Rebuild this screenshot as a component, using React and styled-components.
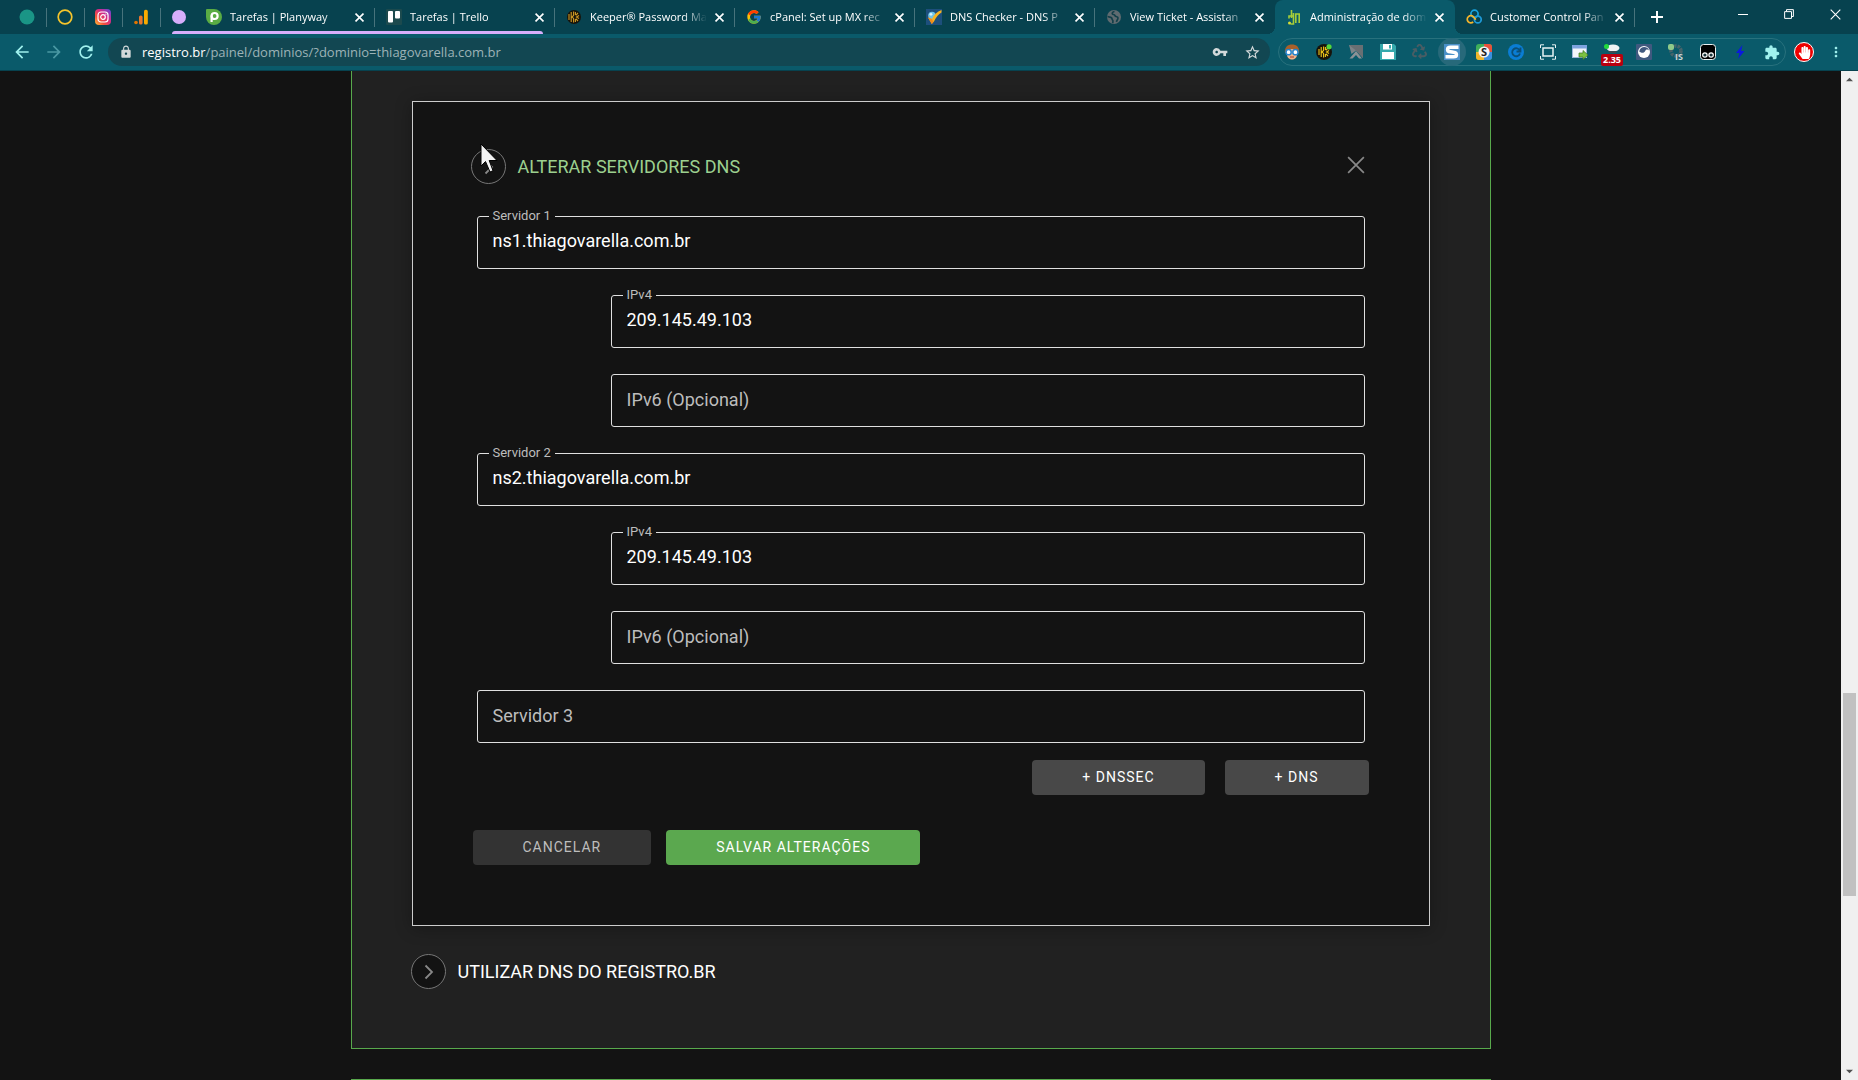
import React, { useState } from 'react';
import styled, { createGlobalStyle, css } from 'styled-components';
import { FcGoogle } from 'react-icons/fc';
import { FaRecycle, FaHandPaper } from 'react-icons/fa';
import {
  MdArrowBack,
  MdArrowForward,
  MdRefresh,
  MdLock,
  MdVpnKey,
  MdStarBorder,
  MdExtension,
  MdMoreVert,
} from 'react-icons/md';

const GlobalStyle = createGlobalStyle`
  * {
    box-sizing: border-box;
  }

  body {
    margin: 0;
    background: #131313;
    font-family: Roboto, "Liberation Sans", sans-serif;
  }

  button {
    margin: 0;
    padding: 0;
    border: 0;
    background: none;
    color: inherit;
    font: inherit;
    cursor: pointer;
  }
`;

const Window = styled.div`
  display: flex;
  flex-direction: column;
  height: 100vh;
  overflow: hidden;
`;

/* ---------- browser chrome ---------- */

const Chrome = styled.header`
  flex: none;
  font-family: "Open Sans", "Noto Sans", sans-serif;
  color: #fff;
`;

const TabStrip = styled.div`
  display: flex;
  height: 34px;
  padding-left: 9px;
  background: #07424f;
`;

const separator = css`
  &::after {
    content: '';
    position: absolute;
    top: 8px;
    right: 0;
    width: 1px;
    height: 19px;
    background: #47737c;
  }
`;

const PinnedTab = styled.button`
  position: relative;
  display: flex;
  align-items: center;
  justify-content: center;
  flex: none;
  width: 38px;
  padding-right: 2px;
  ${separator}
`;

const TabGroup = styled.div`
  position: relative;
  display: flex;
  flex: 0 1 394px;
  min-width: 0;

  &::before {
    content: '';
    position: absolute;
    left: 11px;
    right: 12px;
    bottom: 0;
    height: 3px;
    border-radius: 3px 3px 0 0;
    background: #d7aefb;
  }
`;

const GroupChip = styled.button`
  flex: none;
  align-self: center;
  width: 14px;
  height: 14px;
  margin: 0 9px 0 11px;
  border-radius: 50%;
  background: #d7aefb;
`;

const TabBox = styled.div`
  position: relative;
  display: flex;
  align-items: center;
  flex: 0 1 180px;
  gap: 8px;
  min-width: 0;
  padding: 0 11px;
  ${(props) => props.$line && separator}
  ${(props) =>
    props.$active &&
    css`
      border-radius: 8px 8px 0 0;
      background: #0a5a6a;

      &::before,
      &::after {
        content: '';
        position: absolute;
        bottom: 0;
        width: 8px;
        height: 8px;
      }

      &::before {
        left: -8px;
        background: radial-gradient(circle at 0 0, #07424f 8px, #0a5a6a 8px);
      }

      &::after {
        right: -8px;
        background: radial-gradient(circle at 100% 0, #07424f 8px, #0a5a6a 8px);
      }
    `}
`;

const TabTitle = styled.span`
  flex: 1;
  min-width: 0;
  overflow: hidden;
  white-space: nowrap;
  font-size: 11px;
  line-height: 16px;
  mask-image: linear-gradient(to right, #000 calc(100% - 24px), transparent);
`;

const TabClose = styled.button`
  display: flex;
  flex: none;
`;

const NewTab = styled.button`
  display: flex;
  align-items: center;
  justify-content: center;
  flex: none;
  width: 44px;
`;

const WindowControls = styled.div`
  display: flex;
  flex: none;
  height: 28px;
  margin-left: auto;
`;

const WindowButton = styled.button`
  display: flex;
  align-items: center;
  justify-content: center;
  width: 46px;
`;

const Toolbar = styled.div`
  display: flex;
  align-items: center;
  height: 37px;
  padding: 0 14px 0 6px;
  border-bottom: 1px solid #07424f;
  background: #0a5a6a;
`;

const NavButton = styled.button`
  display: flex;
  align-items: center;
  justify-content: center;
  width: 32px;
  height: 28px;
  color: ${(props) => (props.$dim ? '#4a98a3' : '#a0f1ee')};
`;

const Omnibox = styled.div`
  display: flex;
  align-items: center;
  flex: 1;
  min-width: 0;
  height: 28px;
  margin: 0 8px 0 6px;
  padding: 0 9px 0 11px;
  border-radius: 14px;
  background: #124752;
  color: #d3d9da;
`;

const Address = styled.div`
  flex: 1;
  min-width: 0;
  margin-left: 9px;
  overflow: hidden;
  white-space: nowrap;
  font-size: 13px;
  line-height: 20px;
  color: #9db3b7;

  b {
    font-weight: 400;
    color: #fff;
  }
`;

const OmniButton = styled.button`
  display: flex;
  margin-left: 16px;
`;

const Extensions = styled.div`
  display: flex;
  align-items: center;
  gap: 16px;
  height: 28px;
  padding: 0 5px;
  border: 1px solid #28717d;
  border-radius: 14px;
`;

const ExtButton = styled.button`
  position: relative;
  display: flex;
  width: 16px;
  height: 16px;
  ${(props) =>
    props.$lit &&
    css`
      border-radius: 50%;
      background: #27697a;
      box-shadow: 0 0 0 6px #27697a;
    `}
`;

const Badge = styled.span`
  position: absolute;
  top: 10px;
  left: 50%;
  transform: translateX(-50%);
  padding: 0 2px;
  border-radius: 2px;
  background: #b8000f;
  font-size: 9px;
  font-weight: 700;
  line-height: 12px;
`;

const Profile = styled.button`
  display: flex;
  align-items: center;
  justify-content: center;
  width: 20px;
  height: 20px;
  margin: 0 14px 0 8px;
  border: 1px solid #fff;
  border-radius: 50%;
  background: #ee0000;
  color: #fff;
`;

const MenuButton = styled.button`
  display: flex;
  color: #a0f1ee;
`;

/* ---------- page ---------- */

const Viewport = styled.div`
  display: flex;
  flex: 1;
  min-height: 0;
`;

const Content = styled.main`
  flex: 1;
  min-width: 0;
  overflow: hidden;
`;

const Card = styled.section`
  max-width: 1140px;
  margin: 0 auto 30px;
  padding: 30px 60px 59px;
  border: 1px solid #58a94c;
  background: #212121;
  ${(props) => props.$continued && 'border-top: 0;'}
`;

const Dialog = styled.section`
  margin-bottom: 28px;
  padding: 47px 59px 60px;
  border: 1px solid #ccc;
  background: #131313;
  box-shadow: 0 2px 16px rgba(0, 0, 0, 0.3);
`;

const Header = styled.div`
  display: flex;
  align-items: flex-start;
  justify-content: space-between;
  margin-left: -1px;
`;

const Toggle = styled.button`
  display: flex;
  align-items: center;
  gap: 12px;
  color: ${(props) => (props.$open ? '#9cd08f' : '#fff')};
  font-size: 18px;
  line-height: 24px;
`;

const Ring = styled.span`
  position: relative;
  display: flex;
  align-items: center;
  justify-content: center;
  width: 35px;
  height: 35px;
  border: 1px solid #777;
  border-radius: 50%;
  background: #131313;
`;

const Pointer = styled.svg`
  position: absolute;
  top: -7px;
  left: 8px;
`;

const CloseButton = styled.button`
  display: flex;
  margin: 7px 5px 0 0;
`;

const Fields = styled.div`
  display: flex;
  flex-direction: column;
  gap: 26px;
  margin: 32px 5px 17px;
`;

const FieldBox = styled.div`
  position: relative;
  margin-left: ${(props) => (props.$nested ? '134px' : '0')};
`;

const FieldInput = styled.input`
  display: block;
  width: 100%;
  height: 53px;
  padding: 0 15px 4px;
  border: 1px solid #e0e0e0;
  border-radius: 3px;
  outline: 0;
  background: transparent;
  color: #fff;
  font: 18px Roboto, "Liberation Sans", sans-serif;
`;

const FieldLabel = styled.label`
  position: absolute;
  top: 14px;
  left: 12px;
  padding: 0 4px;
  background: #131313;
  color: #bdbdbd;
  font-size: 18px;
  line-height: 24px;
  ${(props) =>
    props.$floating &&
    css`
      top: -8px;
      font-size: 13px;
      line-height: 16px;
    `}
`;

const Actions = styled.div`
  display: flex;
  justify-content: ${(props) => (props.$end ? 'flex-end' : 'flex-start')};
  gap: ${(props) => (props.$end ? '20px' : '15px')};
  margin: 0 1px;

  & + & {
    margin-top: 35px;
  }
`;

const tones = {
  add: ['#484848', '#fff'],
  cancel: ['#333', '#bdbdbd'],
  save: ['#5ba84f', '#fff'],
};

const Button = styled.button`
  height: 35px;
  padding: 0 50px 2px;
  border-radius: 4px;
  background: ${(props) => tones[props.$tone][0]};
  color: ${(props) => tones[props.$tone][1]};
  font-size: 14px;
  letter-spacing: 1px;
`;

const Scrollbar = styled.div`
  display: flex;
  flex-direction: column;
  flex: none;
  width: 17px;
  background: #f0f0f0;
`;

const ScrollArrow = styled.button`
  display: flex;
  align-items: center;
  justify-content: center;
  height: 17px;
`;

const Track = styled.div`
  flex: ${(props) => props.$share};
`;

const Thumb = styled.div`
  flex: 203;
  margin: 0 2px;
  background: #c1c1c1;
`;

/* ---------- icons ---------- */

const Svg = ({ size = 16, children, ...rest }) => (
  <svg width={size} height={size} viewBox="0 0 16 16" fill="none" aria-hidden="true" {...rest}>
    {children}
  </svg>
);

const Instagram = () => (
  <Svg>
    <defs>
      <linearGradient id="ig" x1="0" y1="1" x2="1" y2="0">
        <stop offset="0" stopColor="#fdc33b" />
        <stop offset="0.3" stopColor="#f5513a" />
        <stop offset="0.6" stopColor="#d62a86" />
        <stop offset="1" stopColor="#5b4fe0" />
      </linearGradient>
    </defs>
    <rect width="16" height="16" rx="4" fill="url(#ig)" />
    <rect x="3" y="3" width="10" height="10" rx="3" stroke="#fff" strokeWidth="1.2" />
    <circle cx="8" cy="8" r="2.3" stroke="#fff" strokeWidth="1.2" />
    <circle cx="10.9" cy="5.1" r="0.7" fill="#fff" />
  </Svg>
);

const Analytics = () => (
  <Svg>
    <circle cx="3" cy="13.5" r="1.8" fill="#e37400" />
    <rect x="6" y="6.5" width="3.6" height="9" rx="1.6" fill="#e8772e" />
    <rect x="11" y="0.8" width="3.8" height="14.7" rx="1.6" fill="#f9ab00" />
  </Svg>
);

const Planyway = () => (
  <Svg>
    <path d="M1 0h7a8 8 0 1 1-8 8V1a1 1 0 0 1 1-1z" fill="#5aac44" />
    <circle cx="8.6" cy="7" r="3" stroke="#fff" strokeWidth="2.2" />
    <path d="M5.6 6.5V13" stroke="#fff" strokeWidth="2.2" />
  </Svg>
);

const Trello = () => (
  <Svg>
    <rect width="16" height="16" rx="1" fill="#1c4a4e" />
    <rect x="2" y="2" width="5" height="11.5" rx="1" fill="#fff" />
    <rect x="9" y="2" width="5" height="7.5" rx="1" fill="#fff" />
  </Svg>
);

const Keeper = ({ dot }) => (
  <Svg>
    <circle cx="8" cy="8" r={dot ? 8 : 7} fill="#17130a" />
    <path
      d="M3 5v6M5.2 3v10M7.6 2.5v4L5.9 8l1.700 1.400v4M9.400 3v3M9.400 10v3M13 6.500L10.500 8l2.500 1.500M12 4L9.800 6.300M9.800 9.700l2.200 2.300"
      stroke={dot ? '#f0c519' : '#cf9a25'}
      strokeWidth="1.100"
    />
    {dot && <circle cx="13" cy="2.800" r="2.600" fill="#54d83a" />}
  </Svg>
);

const DnsChecker = () => (
  <Svg>
    <rect width="16" height="16" fill="#1d4f7c" />
    <circle cx="6" cy="6.500" r="3.800" fill="#6fc3e6" />
    <circle cx="5" cy="5.300" r="1.400" fill="#d8f2fb" />
    <path d="M2 8.500l4 1.500C8 6 11 2.500 15.500 1v2.500C12.500 5 10 8.500 8 12.500L5.800 15z" fill="#f8b31c" />
    <path d="M2 8.500l3.800 6.500 1.500-2L6 10z" fill="#f08a1d" />
  </Svg>
);

const Globe = () => (
  <Svg>
    <circle cx="8" cy="8" r="7" fill="#5f6b70" />
    <path d="M8.500 2.500C6 3 5.500 5 7.500 5.500c2 .3 1 1.800 2.600 2 1.500.2 2.300 1 1.600 2.600l-1.400 2.700M1.500 7.500l3.300.8c1.800.4.800 2 1.800 2.800.8.700.2 1.700.1 3" stroke="#123f49" strokeWidth="1.700" />
  </Svg>
);

const Registro = () => (
  <Svg>
    <path d="M5.500 1v8M3 9.500V7h4.500M7.500 4v11h-3M9.800 14V5H14M13.200 5v9" stroke="#a5cd39" strokeWidth="1.600" />
    <circle cx="3.500" cy="14" r="1.500" fill="#d8dd35" />
  </Svg>
);

const Cloud = () => (
  <Svg>
    <circle cx="8.500" cy="4.800" r="3.600" stroke="#19a3e0" strokeWidth="1.700" />
    <circle cx="11.800" cy="10.500" r="3.400" stroke="#1e9ad8" strokeWidth="1.700" />
    <path d="M7.200 13a3.600 3.600 0 1 1 .4-5l2.200 2.600" stroke="#f5b52b" strokeWidth="1.700" />
  </Svg>
);

const Cross = ({ size, color = '#fff', width = 1.6 }) => (
  <Svg size={size}>
    <path d="M1 1l14 14M15 1L1 15" stroke={color} strokeWidth={(width * 16) / size} />
  </Svg>
);

const Face = () => (
  <Svg>
    <path d="M1 9C0 3 4 .500 8 .500S16 3 15 9z" fill="#a8602a" />
    <path d="M3 5h10v6c0 2.500-2.500 4.500-5 4.500S3 13.500 3 11z" fill="#f0b48a" />
    <path d="M2 6c3 0 5-1 7-3 1 2 3 3 5 3l-1-4H4z" fill="#a8602a" />
    <circle cx="4.600" cy="8.200" r="2.600" fill="#fff" stroke="#2585cf" strokeWidth="1.500" />
    <circle cx="11.400" cy="8.200" r="2.600" fill="#fff" stroke="#2585cf" strokeWidth="1.500" />
    <path d="M6 13h4" stroke="#9c3b30" />
  </Svg>
);

const GreyFlag = () => (
  <Svg>
    <path d="M1 1h14v13L8 6.500 3.500 10z" fill="#7d8488" />
    <path d="M1 1l7 5.500L15 14V1z" fill="#696f73" />
    <path d="M8 7l-6.500 7.500h3L8 11l3 3.500h3z" fill="#8b9195" />
  </Svg>
);

const Floppy = () => (
  <Svg>
    <path d="M0 0h14l2 2v14H0z" fill="#35a9ac" />
    <path d="M3 0h9v5.500H3zM2 8h12v7H2z" fill="#fff" />
    <path d="M9 1h2v3.500H9z" fill="#35a9ac" />
  </Svg>
);

const glyph = { fontFamily: 'Open Sans, sans-serif', fontWeight: 700, textAnchor: 'middle' };

const BlueS = () => (
  <Svg>
    <rect width="16" height="16" fill="#4a90c8" />
    <path d="M14.500 3.200H6.500c-4 0-4 4.300 0 4.600l3 .4c4 .4 4 4.600 0 4.600h-8" stroke="#fff" strokeWidth="3.400" />
  </Svg>
);

const ColorS = () => (
  <Svg>
    <rect width="16" height="16" rx="3" fill="#3fae5a" />
    <path d="M8 0h5a3 3 0 0 1 3 3v5H8z" fill="#e7523b" />
    <path d="M8 8h8v5a3 3 0 0 1-3 3H8z" fill="#3b8fe0" />
    <path d="M0 8h8v8H3a3 3 0 0 1-3-3z" fill="#f0b62c" />
    <circle cx="8" cy="8" r="5.500" fill="#f4f4f4" />
    <text x="8" y="12" fontSize="11" fill="#222" {...glyph}>S</text>
  </Svg>
);

const BlueC = () => (
  <Svg>
    <circle cx="8" cy="8" r="8" fill="#0a7dd4" />
    <path d="M11.800 6.500A4 4 0 1 0 12 9.500M12.500 3.500v4H8.500" stroke="#0a4f78" strokeWidth="1.800" />
  </Svg>
);

const Frame = () => (
  <Svg>
    <rect x="3" y="4" width="10" height="8" stroke="#e8f3f4" strokeWidth="1.500" />
    <path d="M.500 4V.800H4M12 .800h3.500V4M15.500 12v3.200H12M4 15.200H.500V12" stroke="#e8f3f4" />
  </Svg>
);

const SendWindow = () => (
  <Svg>
    <rect x="0.500" y="1.500" width="14" height="12" fill="#f2f5fa" stroke="#9db5da" />
    <path d="M0 1h15v3.500H0z" fill="#7ea3de" />
    <path d="M7 9h4V6.500l5 4.500-5 4.500V13H7z" fill="#7cc142" stroke="#3c7a1d" strokeWidth="0.700" />
  </Svg>
);

const Ufo = () => (
  <Svg>
    <ellipse cx="9" cy="4" rx="6.500" ry="3.500" fill="#eef3f4" />
    <path d="M4 7h9l-1 2H6z" fill="#3b4b50" />
    <circle cx="2.500" cy="2.500" r="2.500" fill="#22d83c" />
  </Svg>
);

const Swirl = () => (
  <Svg>
    <rect width="16" height="16" rx="1" fill="#40597f" />
    <circle cx="8" cy="8" r="6" fill="#fff" />
    <path d="M3.200 7.500c2.800 2 5 1.500 6-.5s2.600-1.600 3.800-.6c-.5-2.400-2.800-3.300-4.800-3.300s-4.600 1.400-5 4.400z" fill="#40597f" />
  </Svg>
);

const GearJs = () => (
  <Svg>
    <circle cx="8" cy="7" r="5" stroke="#47646b" strokeWidth="3.500" strokeDasharray="2.500 1" />
    <rect width="6" height="6" rx="2" fill="#8fc98a" />
    <text x="11" y="15.500" fontSize="9" fill="#c9d2d4" {...glyph}>JS</text>
  </Svg>
);

const Monkey = () => (
  <Svg>
    <rect x="0.500" y="0.500" width="15" height="15" rx="3" fill="#000" stroke="#e8f0f1" />
    <circle cx="4.900" cy="11" r="2.200" fill="#18343a" stroke="#fff" strokeWidth="1.200" />
    <circle cx="11.100" cy="11" r="2.200" fill="#18343a" stroke="#fff" strokeWidth="1.200" />
  </Svg>
);

const Bolt = () => (
  <Svg>
    <path d="M10.500 1L4 9h3.500L6 15l6.500-8H9z" fill="#0b18e0" />
  </Svg>
);

const Chevron = () => (
  <Svg size={16}>
    <path d="M5.500 1.500L12 8l-6.500 6.500" stroke="#888" strokeWidth="1.800" />
  </Svg>
);

/* ---------- data ---------- */

const pinned = [
  { name: 'Meet', icon: <Svg><circle cx="8" cy="8" r="7.500" fill="#1a9586" /></Svg> },
  { name: 'Painel', icon: <Svg><circle cx="8" cy="8" r="6.800" stroke="#f5c42c" strokeWidth="1.700" /></Svg> },
  { name: 'Instagram', icon: <Instagram /> },
  { name: 'Analytics', icon: <Analytics /> },
];

const groupTabs = [
  { title: 'Tarefas | Planyway', icon: <Planyway />, line: true },
  { title: 'Tarefas | Trello', icon: <Trello />, line: true },
];

const tabs = [
  { title: 'Keeper® Password Ma', icon: <Keeper />, line: true },
  { title: 'cPanel: Set up MX rec', icon: <FcGoogle size={16} />, line: true },
  { title: 'DNS Checker - DNS P', icon: <DnsChecker />, line: true },
  { title: 'View Ticket - Assistan', icon: <Globe /> },
  { title: 'Administração de dom', icon: <Registro />, active: true },
  { title: 'Customer Control Pan', icon: <Cloud />, line: true },
];

const extensions = [
  { name: 'Avatar', icon: <Face /> },
  { name: 'Keeper', icon: <Keeper dot /> },
  { name: 'Flag', icon: <GreyFlag /> },
  { name: 'Save', icon: <Floppy /> },
  { name: 'Recycle', icon: <FaRecycle size={15} color="#4a5d64" /> },
  { name: 'Stylus', icon: <BlueS />, lit: true },
  { name: 'Search', icon: <ColorS /> },
  { name: 'Clockify', icon: <BlueC /> },
  { name: 'Capture', icon: <Frame /> },
  { name: 'Send', icon: <SendWindow /> },
  { name: 'Speed', icon: <Ufo />, badge: '2.35' },
  { name: 'Swirl', icon: <Swirl /> },
  { name: 'Scripts', icon: <GearJs /> },
  { name: 'Monkey', icon: <Monkey /> },
  { name: 'Bolt', icon: <Bolt /> },
  { name: 'Extensions', icon: <MdExtension size={17} color="#a0f1ee" /> },
];

const fields = [
  { id: 'dns1', label: 'Servidor 1', value: 'ns1.thiagovarella.com.br' },
  { id: 'dns1v4', label: 'IPv4', value: '209.145.49.103', nested: true },
  { id: 'dns1v6', label: 'IPv6 (Opcional)', value: '', nested: true },
  { id: 'dns2', label: 'Servidor 2', value: 'ns2.thiagovarella.com.br' },
  { id: 'dns2v4', label: 'IPv4', value: '209.145.49.103', nested: true },
  { id: 'dns2v6', label: 'IPv6 (Opcional)', value: '', nested: true },
  { id: 'dns3', label: 'Servidor 3', value: '' },
];

/* ---------- components ---------- */

function Tab({ tab }) {
  return (
    <TabBox $active={tab.active} $line={tab.line}>
      {tab.icon}
      <TabTitle>{tab.title}</TabTitle>
      <TabClose aria-label="Fechar guia">
        <Cross size={9} />
      </TabClose>
    </TabBox>
  );
}

function BrowserChrome() {
  return (
    <Chrome>
      <TabStrip>
        {pinned.map((tab) => (
          <PinnedTab key={tab.name} aria-label={tab.name}>{tab.icon}</PinnedTab>
        ))}
        <TabGroup>
          <GroupChip aria-label="Grupo" />
          {groupTabs.map((tab) => <Tab key={tab.title} tab={tab} />)}
        </TabGroup>
        {tabs.map((tab) => <Tab key={tab.title} tab={tab} />)}
        <NewTab aria-label="Nova guia">
          <Svg size={12}>
            <path d="M8 0v16M0 8h16" stroke="#fff" strokeWidth="2.600" />
          </Svg>
        </NewTab>
        <WindowControls>
          <WindowButton aria-label="Minimizar">
            <Svg size={10}><path d="M0 8.800h16" stroke="#fff" strokeWidth="1.600" /></Svg>
          </WindowButton>
          <WindowButton aria-label="Restaurar">
            <Svg size={10}>
              <path d="M1 4.200h11V15H1zM4 4V1h11v11h-3" stroke="#fff" strokeWidth="1.600" />
            </Svg>
          </WindowButton>
          <WindowButton aria-label="Fechar">
            <Cross size={11} width={1.1} />
          </WindowButton>
        </WindowControls>
      </TabStrip>
      <Toolbar>
        <NavButton aria-label="Voltar"><MdArrowBack size={20} /></NavButton>
        <NavButton $dim aria-label="Avançar"><MdArrowForward size={20} /></NavButton>
        <NavButton aria-label="Recarregar"><MdRefresh size={20} /></NavButton>
        <Omnibox>
          <MdLock size={14} />
          <Address><b>registro.br</b>/painel/dominios/?dominio=thiagovarella.com.br</Address>
          <OmniButton aria-label="Senhas"><MdVpnKey size={16} /></OmniButton>
          <OmniButton aria-label="Favoritar"><MdStarBorder size={17} /></OmniButton>
        </Omnibox>
        <Extensions>
          {extensions.map((ext) => (
            <ExtButton key={ext.name} $lit={ext.lit} aria-label={ext.name}>
              {ext.icon}
              {ext.badge && <Badge>{ext.badge}</Badge>}
            </ExtButton>
          ))}
        </Extensions>
        <Profile aria-label="Perfil"><FaHandPaper size={13} /></Profile>
        <MenuButton aria-label="Menu"><MdMoreVert size={16} /></MenuButton>
      </Toolbar>
    </Chrome>
  );
}

function Field({ field }) {
  const [value, setValue] = useState(field.value);

  return (
    <FieldBox $nested={field.nested}>
      <FieldInput id={field.id} value={value} onChange={(e) => setValue(e.target.value)} />
      <FieldLabel htmlFor={field.id} $floating={value !== ''}>{field.label}</FieldLabel>
    </FieldBox>
  );
}

function DnsDialog() {
  return (
    <Dialog>
      <Header>
        <Toggle $open>
          <Ring>
            <Chevron />
            <Pointer width="19" height="31" viewBox="0 0 19 31" aria-hidden="true">
              <path d="M1 1v22l4.500-4.500L10 29l3-1.300L9.200 17.500H17z" fill="#f2f2f2" stroke="#000" />
            </Pointer>
          </Ring>
          ALTERAR SERVIDORES DNS
        </Toggle>
        <CloseButton aria-label="Fechar">
          <Cross size={18} color="#888" width={1.7} />
        </CloseButton>
      </Header>
      <Fields>
        {fields.map((field) => <Field key={field.id} field={field} />)}
      </Fields>
      <Actions $end>
        <Button $tone="add">+ DNSSEC</Button>
        <Button $tone="add">+ DNS</Button>
      </Actions>
      <Actions>
        <Button $tone="cancel">CANCELAR</Button>
        <Button $tone="save">SALVAR ALTERAÇÕES</Button>
      </Actions>
    </Dialog>
  );
}

function App() {
  return (
    <Window>
      <GlobalStyle />
      <BrowserChrome />
      <Viewport>
        <Content>
          <Card $continued>
            <DnsDialog />
            <Header>
              <Toggle>
                <Ring><Chevron /></Ring>
                UTILIZAR DNS DO REGISTRO.BR
              </Toggle>
            </Header>
          </Card>
          <Card />
        </Content>
        <Scrollbar>
          <ScrollArrow aria-label="Rolar para cima">
            <Svg size={7}><path d="M0 12L8 4l8 8z" fill="#505050" /></Svg>
          </ScrollArrow>
          <Track $share={605} />
          <Thumb />
          <Track $share={167} />
          <ScrollArrow aria-label="Rolar para baixo">
            <Svg size={7}><path d="M0 4l8 8 8-8z" fill="#505050" /></Svg>
          </ScrollArrow>
        </Scrollbar>
      </Viewport>
    </Window>
  );
}

export default App;
